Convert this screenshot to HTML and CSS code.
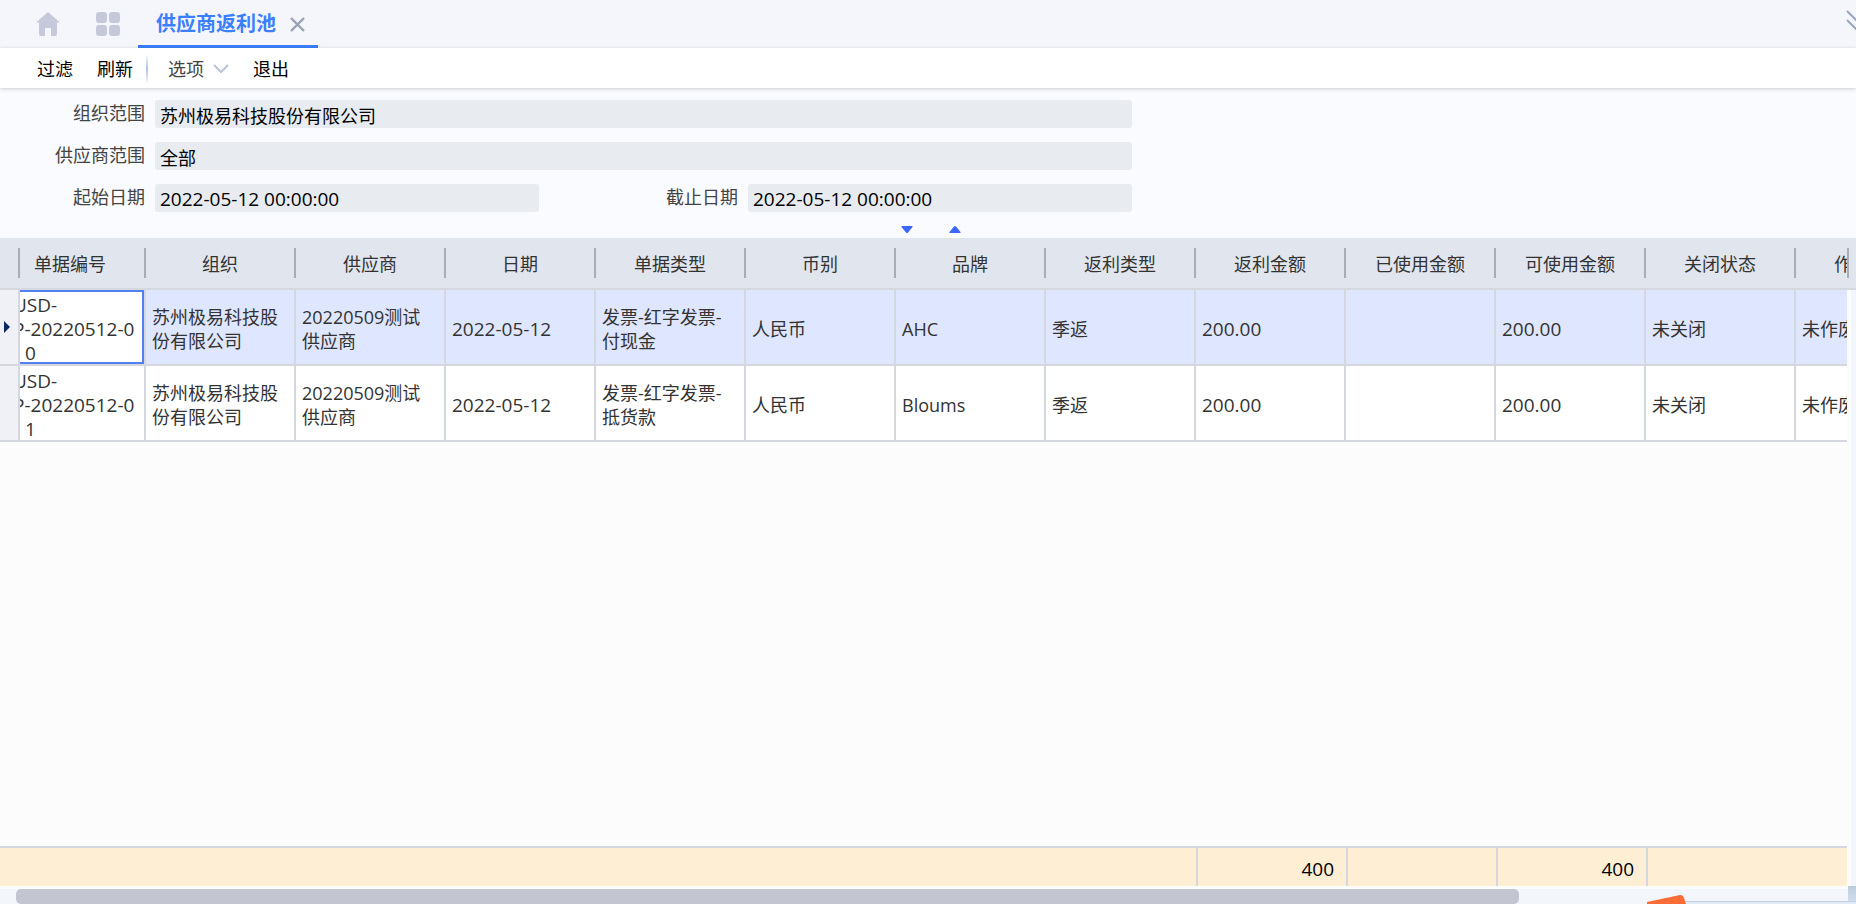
FILE: index.html
```
<!DOCTYPE html>
<html lang="zh-CN">
<head>
    <meta charset="UTF-8">
    <meta name="viewport" content="width=device-width, initial-scale=1.0">
    <title>供应商返利池</title>
    <link rel="stylesheet" href="styles.css">
</head>
<body>
    <header class="tabs">
        <a class="tab-icon" href="#" aria-label="首页">
            <svg width="24" height="24" viewBox="0 0 24 24"><path d="M12 0 L24 10.5 H21 V22 Q21 24 19 24 H15 V17 Q15 16 14 16 H10 Q9 16 9 17 V24 H5 Q3 24 3 22 V10.5 H0 Z" fill="#c5c9da"/></svg>
        </a>
        <a class="tab-icon" href="#" aria-label="应用">
            <svg width="24" height="24" viewBox="0 0 24 24" fill="#c5c9da"><rect width="11" height="11" rx="3"/><rect x="13" width="11" height="11" rx="3"/><rect y="13" width="11" height="11" rx="3"/><rect x="13" y="13" width="11" height="11" rx="3"/></svg>
        </a>
        <div class="tab active">
            <a href="#">供应商返利池</a>
            <button class="close" aria-label="关闭">
                <svg width="15" height="15" viewBox="0 0 15 15"><path d="M1 1 L14 14 M14 1 L1 14" stroke="#98a1b5" stroke-width="2.400" fill="none"/></svg>
            </button>
        </div>
        <button class="more" aria-label="更多">
            <svg width="20" height="20" viewBox="0 0 20 20"><path d="M1 1 L10 10 L19 1 M1 10 L10 19 L19 10" stroke="#9aa5bd" stroke-width="2" fill="none"/></svg>
        </button>
    </header>

    <nav class="toolbar">
        <button>过滤</button>
        <button>刷新</button>
        <span class="divider"></span>
        <button class="options">选项
            <svg width="16" height="10" viewBox="0 0 16 10"><path d="M1 1 L8 8 L15 1" stroke="#bcc3d2" stroke-width="2" fill="none"/></svg>
        </button>
        <button>退出</button>
    </nav>

    <form class="filters">
        <label for="org">组织范围</label>
        <input class="wide" id="org" type="text" value="苏州极易科技股份有限公司" readonly>
        <label for="supplier">供应商范围</label>
        <input class="wide" id="supplier" type="text" value="全部" readonly>
        <label for="start">起始日期</label>
        <input class="date" id="start" type="text" value="2022-05-12 00:00:00" readonly>
        <label for="end">截止日期</label>
        <input class="date" id="end" type="text" value="2022-05-12 00:00:00" readonly>
    </form>

    <div class="toggles">
        <button aria-label="展开"><svg width="12" height="7" viewBox="0 0 12 7"><path d="M1 0 H11 Q12 0 11.500 1 L7 6.500 Q6 7.500 5 6.500 L.5 1 Q0 0 1 0" fill="#3b66ff"/></svg></button>
        <button aria-label="收起"><svg width="12" height="7" viewBox="0 0 12 7"><path d="M1 7 H11 Q12 7 11.500 6 L7 .5 Q6 -.5 5 .5 L.5 6 Q0 7 1 7" fill="#3b66ff"/></svg></button>
    </div>

    <main class="grid">
        <div class="grid-main">
            <table>
                <colgroup>
                    <col class="col-mark">
                    <col class="col-no">
                    <col span="12">
                </colgroup>
                <thead>
                    <tr>
                        <th></th>
                        <th class="no">单据编号</th>
                        <th>组织</th>
                        <th>供应商</th>
                        <th>日期</th>
                        <th>单据类型</th>
                        <th>币别</th>
                        <th>品牌</th>
                        <th>返利类型</th>
                        <th>返利金额</th>
                        <th>已使用金额</th>
                        <th>可使用金额</th>
                        <th>关闭状态</th>
                        <th>作废状态</th>
                    </tr>
                </thead>
                <tbody>
                    <tr class="selected">
                        <td class="mark"><span class="arrow"></span></td>
                        <td class="no"><div>USD-<br>P-20220512-0<br><span class="tail">0</span></div></td>
                        <td>苏州极易科技股份有限公司</td>
                        <td>20220509测试<br>供应商</td>
                        <td class="num">2022-05-12</td>
                        <td>发票-红字发票-<br>付现金</td>
                        <td>人民币</td>
                        <td>AHC</td>
                        <td>季返</td>
                        <td class="num">200.00</td>
                        <td></td>
                        <td class="num">200.00</td>
                        <td>未关闭</td>
                        <td>未作废</td>
                    </tr>
                    <tr>
                        <td class="mark"></td>
                        <td class="no"><div>USD-<br>P-20220512-0<br><span class="tail">1</span></div></td>
                        <td>苏州极易科技股份有限公司</td>
                        <td>20220509测试<br>供应商</td>
                        <td class="num">2022-05-12</td>
                        <td>发票-红字发票-<br>抵货款</td>
                        <td>人民币</td>
                        <td>Bloums</td>
                        <td>季返</td>
                        <td class="num">200.00</td>
                        <td></td>
                        <td class="num">200.00</td>
                        <td>未关闭</td>
                        <td>未作废</td>
                    </tr>
                </tbody>
            </table>
            <div class="totals">
                <span></span>
                <span>400</span>
                <span></span>
                <span>400</span>
                <span></span>
            </div>
        </div>
        <div class="grid-side"></div>
    </main>

    <footer class="scroll">
        <div class="thumb"></div>
        <div class="corner"></div>
        <svg class="badge" width="209" height="9" viewBox="0 0 209 9"><path d="M38 6.500 H209" stroke="#c3cfe4"/><path d="M38 7 H209 V9 H38 Z" fill="#e2eaf6"/><path d="M0 7 L33 0 Q36 0 37 3 L39 9 H0 Z" fill="#fb6c37"/></svg>
    </footer>
</body>
</html>
```
FILE: styles.css
```
* {
    box-sizing: border-box;
}

body {
    display: flex;
    flex-direction: column;
    height: 100vh;
    margin: 0;
    overflow: hidden;
    background-color: #fafbff;
    color: #333;
    font-family: "Open Sans", "Noto Sans CJK SC", sans-serif;
    font-size: 18px;
    line-height: 24px;
}

button {
    padding: 0;
    border: none;
    background: none;
    color: #000;
    font: inherit;
    cursor: pointer;
}

svg {
    display: block;
}

/* Tab strip */
.tabs {
    display: flex;
    align-items: center;
    flex-shrink: 0;
    height: 48px;
    padding-left: 36px;
    background-color: #f5f6fb;
    overflow: hidden;
}

.tab-icon {
    margin-right: 36px;
}

.tab {
    display: flex;
    align-items: center;
    justify-content: space-between;
    width: 180px;
    height: 48px;
    margin-left: -18px;
    padding: 3px 13px 0 18px;
    border-bottom: 3px solid #3a7fff;
}

.tab a {
    color: #3a7fff;
    font-size: 20px;
    font-weight: bold;
    text-decoration: none;
}

.more {
    flex-shrink: 0;
    margin: 0 -10px 8px auto;
}

/* Toolbar */
.toolbar {
    position: relative;
    display: flex;
    align-items: center;
    flex-shrink: 0;
    height: 40px;
    padding: 2px 0 0 37px;
    background-color: #fff;
    box-shadow: 0 1px 4px rgba(0, 0, 0, 0.2);
}

.toolbar button {
    margin-right: 24px;
}

.divider {
    width: 2px;
    height: 30px;
    margin: 0 20px 0 -11px;
    background: linear-gradient(#fff, #a9c0e6, #fff);
}

.toolbar .options {
    display: flex;
    align-items: center;
    gap: 9px;
    color: #444;
}

/* Filter form */
.filters {
    display: grid;
    grid-template-columns: 145px 384px 189px 384px;
    column-gap: 10px;
    row-gap: 14px;
    flex-shrink: 0;
    padding-top: 12px;
}

.filters label {
    padding-top: 1px;
    color: #444;
    text-align: right;
}

.filters input {
    width: 100%;
    height: 28px;
    padding: 2px 5px 0;
    border: none;
    border-radius: 3px;
    background-color: #e8ebef;
    color: #000;
    font: inherit;
}

.filters .wide {
    grid-column: 2 / 5;
}

.filters .date {
    font-size: 19px;
}

.toggles {
    display: flex;
    justify-content: center;
    align-items: center;
    gap: 36px;
    flex-shrink: 0;
    height: 26px;
    padding: 8px 0 0 6px;
}

/* Data grid */
.grid {
    display: flex;
    flex: 1;
    min-height: 0;
    background-color: #fcfcfc;
}

.grid-main {
    display: flex;
    flex-direction: column;
    flex: 1;
    min-width: 0;
    overflow: hidden;
}

table {
    width: 1946px;
    table-layout: fixed;
    border-collapse: separate;
    border-spacing: 0;
}

col {
    width: 150px;
}

.col-mark {
    width: 20px;
}

.col-no {
    width: 126px;
}

th {
    height: 52px;
    padding: 2px 2px 0 0;
    border-bottom: 2px solid #d5d8de;
    background: linear-gradient(#a9adb8, #a9adb8) right 10px / 2px 30px no-repeat #e1e5ee;
    font-weight: normal;
}

th.no {
    padding-right: 26px;
}

td {
    height: 76px;
    padding: 4px 6px 0;
    border-right: 2px solid #d4d8de;
    border-bottom: 2px solid #d4d8de;
    background-color: #fff;
}

.selected td {
    background-color: #dfe6ff;
}

td.num {
    font-size: 19px;
}

td.mark {
    padding: 0 4px;
    background-color: #f0f1f6;
}

.arrow {
    display: block;
    width: 6px;
    border: 6px solid transparent;
    border-left-color: #0a2a66;
    border-right: none;
}

td.no {
    padding: 0;
    overflow: hidden;
    font-size: 19px;
    white-space: nowrap;
}

td.no div {
    height: 74px;
    margin-left: -7px;
    padding-top: 3px;
}

td.no .tail {
    padding-left: 12px;
}

.selected td.no {
    background-color: #fff;
    box-shadow: inset -2px 2px #5280ee, inset 0 -2px #5280ee;
}

.grid-side {
    width: 9px;
    background: linear-gradient(#a9adb8, #a9adb8) 0 10px / 2px 30px no-repeat, linear-gradient(#d5d8de, #d5d8de) 0 50px / 100% 2px no-repeat, linear-gradient(#e1e5ee, #e1e5ee) 0 0 / 100% 50px no-repeat, linear-gradient(to right, #fcfcfc 4px, #f3f6fc 4px);
}

.totals {
    display: grid;
    grid-template-columns: 1198px 150px 150px 150px 1fr;
    height: 40px;
    flex-shrink: 0;
    margin-top: auto;
    border-top: 2px solid #d4d8de;
    background-color: #fdeed4;
    color: #000;
    font-size: 19px;
    line-height: 42px;
    text-align: right;
}

.totals span {
    padding-right: 12px;
    border-right: 2px solid #d4d8de;
}

.totals span:last-child {
    border-right: none;
}

/* Horizontal scrollbar */
.scroll {
    position: relative;
    display: flex;
    flex-shrink: 0;
    height: 18px;
    padding-left: 16px;
    border-top: 3px solid #fcfcfc;
    background-color: #f3f6fb;
}

.thumb {
    width: 81.7%;
    border-radius: 5px;
    background-color: #c3c6d0;
}

.corner {
    width: 8px;
    margin-top: -3px;
    margin-left: auto;
    background: linear-gradient(#bccbdc, #d6e1f0);
}

.badge {
    position: absolute;
    right: 0;
    bottom: 0;
}
```
